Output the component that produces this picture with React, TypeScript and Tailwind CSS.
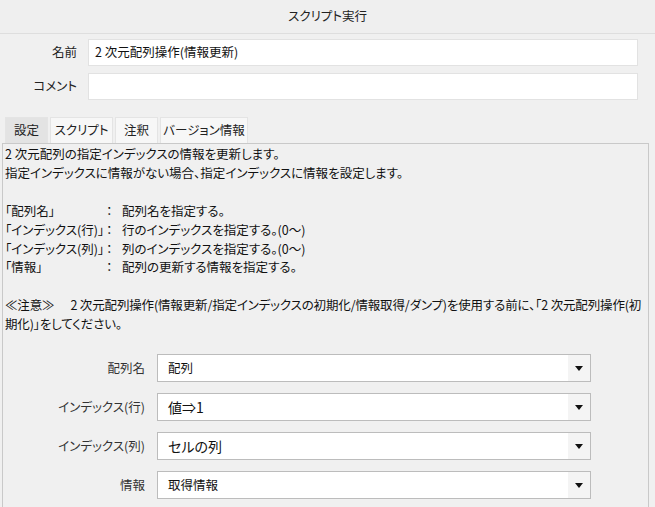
import React from "react";

const font = { fontFamily: '"Noto Sans CJK JP", "Noto Sans", sans-serif' };

const tabs = [
  { t: "設定", w: "w-[43px]" },
  { t: "スクリプト", w: "w-[63px]" },
  { t: "注釈", w: "w-[43px]" },
  { t: "バージョン情報", w: "w-[88px]" },
];

const params = [
  ["「配列名」", "配列名を指定する。"],
  ["「インデックス(行)」", "行のインデックスを指定する。(0～)"],
  ["「インデックス(列)」", "列のインデックスを指定する。(0～)"],
  ["「情報」", "配列の更新する情報を指定する。"],
];

const Field: React.FC<{ label: string; value?: string; top: string }> = ({ label, value, top }) => (
  <div className={`flex items-center ${top}`}>
    <div className="w-[88px] whitespace-nowrap pr-[11px] text-right text-[12.5px] text-[#222]">{label}</div>
    <div className="flex h-[27px] w-[550px] items-center border border-[#e2e2e2] bg-white px-[6px] text-[12.5px] text-[#111]">
      {value}
    </div>
  </div>
);

const Select: React.FC<{ label: string; value: string; big?: boolean }> = ({ label, value, big }) => (
  <div className="flex items-center">
    <div className="w-[140px] whitespace-nowrap text-right text-[12.5px] text-[#333]">{label}</div>
    <div className="ml-[12px] flex h-[28px] w-[434px] items-stretch border border-[#bcbcbc] bg-white">
      <div className={`flex flex-1 items-center pl-[10px] text-[#111] ${big ? "text-[14px]" : "text-[12.5px]"}`}>
        {value}
      </div>
      <div className="flex w-[22px] items-center justify-center bg-[#f4f4f4]">
        <svg width="8" height="5" viewBox="0 0 8 5">
          <path d="M0 0 H8 L4 5 Z" fill="#111" />
        </svg>
      </div>
    </div>
  </div>
);

export default function App() {
  return (
    <div
      className="h-[507px] w-[655px] overflow-hidden bg-[#f0f0f0] [font-feature-settings:'palt']"
      style={font}
    >
      <div className="flex h-[34px] items-center justify-center border-b border-[#dedede] bg-[#efefef] text-[12.5px] text-[#222]">
        スクリプト実行
      </div>

      <Field label="名前" value="2 次元配列操作(情報更新)" top="mt-[5px]" />
      <Field label="コメント" top="mt-[7px]" />

      <div className="mt-[17px] flex gap-[2px] pl-[5px] text-[12.5px] text-[#222]">
        {tabs.map((tab, i) => (
          <div
            key={tab.t}
            className={`flex h-[26px] items-center justify-center whitespace-nowrap border border-b-0 border-[#e4e4e4] ${tab.w} ${
              i === 0 ? "bg-[#e3e3e3]" : "bg-[#f7f7f7]"
            }`}
          >
            {tab.t}
          </div>
        ))}
      </div>

      <div className="ml-[2px] h-[400px] w-[647px] border border-[#c9c9c9] bg-[#f0f0f0] px-[2px] pt-[1px] text-[12.5px] leading-[18.9px] text-[#111]">
        <p>2 次元配列の指定インデックスの情報を更新します。</p>
        <p>指定インデックスに情報がない場合、指定インデックスに情報を設定します。</p>
        <p>&nbsp;</p>
        {params.map(([k, v]) => (
          <p key={k} className="flex whitespace-nowrap">
            <span className="w-[98px]">{k}</span>
            <span className="w-[19px] [font-feature-settings:normal]">：</span>
            <span>{v}</span>
          </p>
        ))}
        <p>&nbsp;</p>
        <p className="tracking-[-0.15px]">
          <span className="mr-[16px]">≪注意≫</span>2 次元配列操作(情報更新/指定インデックスの初期化/情報取得/ダンプ)を使用する前に、「2 次元配列操作(初期化)」をしてください。
        </p>

        <div className="mt-[20px] flex flex-col gap-[11px]">
          <Select label="配列名" value="配列" />
          <Select label="インデックス(行)" value="値⇒1" big />
          <Select label="インデックス(列)" value="セルの列" big />
          <Select label="情報" value="取得情報" />
        </div>
      </div>
    </div>
  );
}
